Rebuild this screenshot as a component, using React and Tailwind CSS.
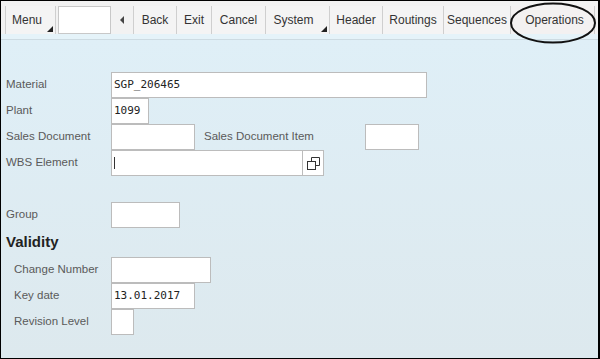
import React from 'react';

const font = { fontFamily: '"Liberation Sans", Arial, sans-serif' };

const toolButtons = [
  { label: 'Back', w: 'w-[43px]' },
  { label: 'Exit', w: 'w-[35px]' },
  { label: 'Cancel', w: 'w-[54px]' },
  { label: 'System', w: 'w-[64px]', menu: true },
  { label: 'Header', w: 'w-[53px]' },
  { label: 'Routings', w: 'w-[61px]' },
  { label: 'Sequences', w: 'w-[67px]' },
];

const Corner = () => (
  <span className="absolute right-[2px] bottom-[2px] w-0 h-0 border-l-[6px] border-l-transparent border-b-[6px] border-b-[#222]" />
);

const Field = ({ w, value, caret }) => (
  <div
    className={`${w} h-[26px] bg-white border border-[#bcbcbc] flex items-center pl-[2px] text-[11px] text-[#222]`}
    style={{ fontFamily: '"DejaVu Sans Mono", "Liberation Mono", monospace' }}
  >
    {value}
    {caret && <span className="w-px h-[12px] bg-[#333]" />}
  </div>
);

const Row = ({ label, indent, children }) => (
  <div className="flex items-center h-[26px]">
    <span className={`w-[105px] ${indent ? 'pl-[8px]' : ''} text-[11.5px] text-[#5a5a5a]`}>{label}</span>
    {children}
  </div>
);

const HelpIcon = () => (
  <svg width="13" height="13" viewBox="0 0 13 13" fill="none" stroke="#333" strokeWidth="1">
    <path d="M4.5 4.5V0.5H12.5V8.5H8.5" />
    <rect x="0.5" y="4.5" width="8" height="8" />
  </svg>
);

export default function App() {
  return (
    <div className="relative w-[600px] h-[359px] overflow-hidden border-t border-l border-b border-r-2 border-black flex flex-col" style={font}>
      {/* toolbar */}
      <div className="h-[33px] bg-[#f2f2f2] flex items-end pl-[4px] shrink-0">
        <div className="relative w-[51px] h-[28px] border-x border-[#cfcfcf] bg-[#f4f4f4] flex items-center pl-[6px] text-[12px] text-[#333]">
          Menu
          <Corner />
        </div>
        <div className="w-[53px] h-[28px] ml-[2px] bg-white border border-[#c8c8c8]" />
        <div className="w-[22px] h-[28px] flex items-center justify-center">
          <span className="w-0 h-0 border-y-[4px] border-y-transparent border-r-[4px] border-r-[#444]" />
        </div>
        {toolButtons.map((b) => (
          <div
            key={b.label}
            className={`relative ${b.w} h-[28px] border-l border-[#cfcfcf] bg-[#f4f4f4] flex items-center justify-center text-[12px] text-[#333]`}
          >
            <span className={b.menu ? 'pr-[8px]' : ''}>{b.label}</span>
            {b.menu && <Corner />}
          </div>
        ))}
        <div className="w-[85px] h-[28px] bg-[#f3f1f1] border-x border-[#cfcfcf] flex items-center justify-center pl-[4px] text-[12px] text-[#333]">
          Operations
        </div>
      </div>
      <div className="h-[6px] bg-[#e5f3f9] border-b border-[#cddbe2] shrink-0" />

      {/* form */}
      <div className="flex-1 bg-gradient-to-b from-[#dfeff7] to-[#dde9ee] pl-[5px] pt-[32px]">
        <Row label="Material">
          <Field w="w-[316px]" value="SGP_206465" />
        </Row>
        <Row label="Plant">
          <Field w="w-[38px]" value="1099" />
        </Row>
        <Row label="Sales Document">
          <Field w="w-[84px]" />
          <span className="w-[170px] pl-[9px] text-[11.5px] text-[#5a5a5a]">Sales Document Item</span>
          <Field w="w-[54px]" />
        </Row>
        <Row label="WBS Element">
          <Field w="w-[192px]" caret />
          <div className="w-[21px] h-[26px] bg-white border border-l-0 border-[#bcbcbc] flex items-center justify-center">
            <HelpIcon />
          </div>
        </Row>
        <div className="mt-[26px]">
          <Row label="Group">
            <Field w="w-[69px]" />
          </Row>
        </div>
        <div className="h-[29px] flex items-center text-[15px] font-bold text-[#222] pb-[1px]">Validity</div>
        <Row label="Change Number" indent>
          <Field w="w-[100px]" />
        </Row>
        <Row label="Key date" indent>
          <Field w="w-[84px]" value="13.01.2017" />
        </Row>
        <Row label="Revision Level" indent>
          <Field w="w-[23px]" />
        </Row>
      </div>

      {/* annotation ellipse */}
      <svg className="absolute left-[508px] top-[1px]" width="88" height="42" viewBox="0 0 88 42">
        <ellipse cx="44" cy="21" rx="42" ry="19.5" fill="none" stroke="#111" strokeWidth="2" />
      </svg>
    </div>
  );
}
